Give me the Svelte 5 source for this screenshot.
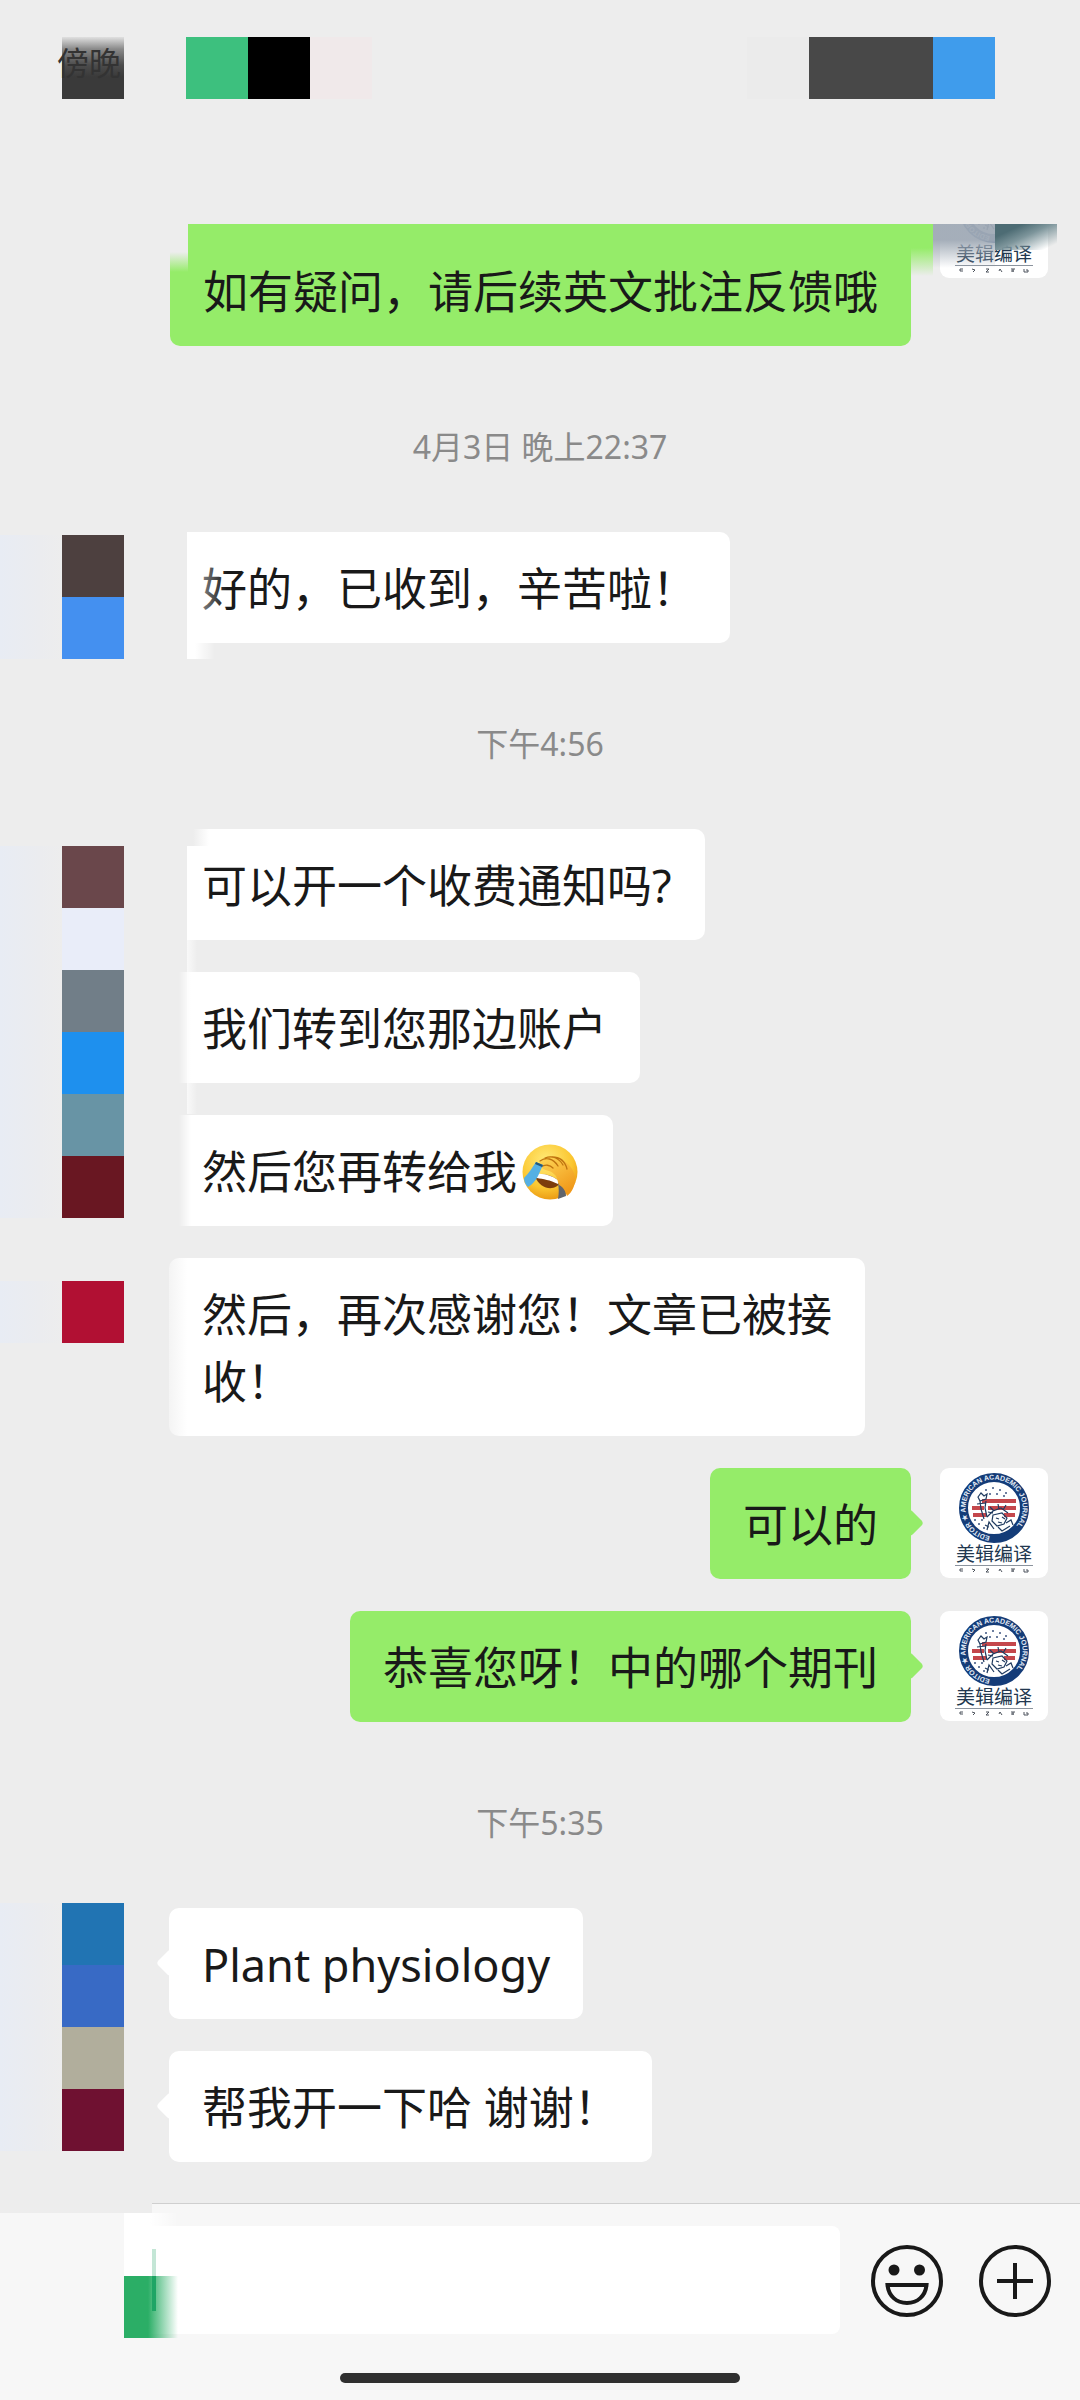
<script>
	const statusLeft = ['fade', 'none', 'green', 'black', 'pink'];
	const statusRight = ['pale', 'dark', 'dark', 'blue'];

	const entries = [
		{ kind: 'out', text: '如有疑问，请后续英文批注反馈哦', cut: 'top' },
		{ kind: 'time', text: '4月3日 晚上22:37' },
		{
			kind: 'in',
			text: '好的，已收到，辛苦啦！',
			cut: 'hard',
			tiles: { top: 3, colors: ['#4d403f', '#4490f0'] }
		},
		{ kind: 'time', text: '下午4:56' },
		{
			kind: 'in',
			text: '可以开一个收费通知吗?',
			cut: 'hard notch',
			tiles: {
				top: 17,
				colors: ['#6a474b', '#e9edf9', '#717e88', '#1e90ee', '#6894a5', '#691722']
			}
		},
		{ kind: 'in', text: '我们转到您那边账户', cut: 'soft' },
		{ kind: 'in', text: '然后您再转给我', cut: 'soft', emoji: true },
		{
			kind: 'in',
			text: '然后，再次感谢您！文章已被接\n收！',
			cut: 'light',
			tiles: { top: 23, colors: ['#b11033'] }
		},
		{ kind: 'out', text: '可以的' },
		{ kind: 'out', text: '恭喜您呀！中的哪个期刊' },
		{ kind: 'time', text: '下午5:35' },
		{
			kind: 'in',
			text: 'Plant physiology',
			tiles: { top: -5, colors: ['#2174b3', '#386ac5', '#b1ae9c', '#6f1131'] }
		},
		{ kind: 'in', text: '帮我开一下哈 谢谢！' }
	];

	let draft = $state('');
</script>

{#snippet avatar(id)}
	<svg class="avatar" viewBox="0 0 108 110" role="img" aria-label="美辑编译">
		<defs>
			<path id="ring-{id}" d="M54 68.5a28.5 28.5 0 1 1 .1 0" />
		</defs>
		<rect width="108" height="110" rx="9" fill="#fff" />
		<circle cx="54" cy="40" r="30.5" fill="#fff" stroke="#143c78" stroke-width="9" />
		<text class="ring-text">
			<textPath href="#ring-{id}" startOffset="4">EDITOR ★ AMERICAN ACADEMIC JOURNAL</textPath>
		</text>
		<g fill="#c4474c">
			<path d="M42 31h34v4H42zM32 38h12v4H32zM48 38h28v4H48zM33 45h13v4H33zM64 45h11v4H64z" />
		</g>
		<g fill="#3d5580">
			<circle cx="46" cy="22" r="1" /><circle cx="53" cy="20" r="1" />
			<circle cx="60" cy="22" r="1" /><circle cx="66" cy="25" r="1" />
			<circle cx="50" cy="26" r="1" /><circle cx="57" cy="26" r="1" />
			<circle cx="64" cy="28" r="1" /><circle cx="35" cy="52" r="1" />
			<circle cx="39" cy="56" r="1" /><circle cx="42" cy="52" r="1" />
			<circle cx="44" cy="60" r="1" />
		</g>
		<g fill="none" stroke="#1f3a5f" stroke-width="1.2">
			<path d="M38 29l3-4 3 3 3-2-1 5-6 2zM40 33l1 8 3 10M46 33l-1 7 2 9M37 36l9-1" />
			<path d="M47 49l6-6 8-3 7 5M50 39l4 4M58 36l1 5M66 37l-3 5M48 44l5 1" />
			<path d="M53 47l9-2 5 5-3 6-7 2-5-5zM56 50l3 1M62 49l3 2M58 54l4 1" />
			<path d="M47 62l2-8 5 7M66 55l5-3 2 5M58 59l4 4 8-5M45 57l4 2" />
		</g>
		<text class="brand" x="54" y="93" text-anchor="middle">美辑编译</text>
		<path d="M15 97.5h78" stroke="#8b939d" stroke-width="1" />
		<path
			d="M23 101h-3v2h3M32 101l3 1-2 2M46 101h3l-3 3h3M59 103l1-2 2 3M71 101h4M71 103h3M73 101v3M84 101v3h4v-2h-2"
			fill="none"
			stroke="#4d535c"
			stroke-width="1"
		/>
	</svg>
{/snippet}

{#snippet facepalm()}
	<svg class="emoji" viewBox="0 0 56 56" role="img" aria-label="捂脸">
		<defs>
			<radialGradient id="skin" cx="0.42" cy="0.3" r="0.75">
				<stop offset="0" stop-color="#ffea78" />
				<stop offset="0.65" stop-color="#fbc630" />
				<stop offset="1" stop-color="#e8930f" />
			</radialGradient>
			<linearGradient id="palm" x1="0" y1="0" x2="0.6" y2="1">
				<stop offset="0" stop-color="#ffd95a" />
				<stop offset="1" stop-color="#f0991a" />
			</linearGradient>
		</defs>
		<circle cx="28" cy="28" r="27.5" fill="url(#skin)" />
		<path d="M13 32c7-4 18-1 25 6-3 9-20 9-25-6z" fill="#7d3d0c" />
		<path d="M14 30c8-1 18 2 24 8l-2 2c-8-4-15-5-21-6z" fill="#fff" />
		<path d="M36 39l7 4 1 9-8 3c1-6 1-10 0-16z" fill="#60646c" />
		<path
			d="M17 20c1-3 5-4 7-6 4-3 10-2 15 1 7 4 13 10 14 18 1 7-3 16-8 19-2-6-4-9-8-11-2-4-1-8-5-11-4-4-8-3-12-6-2-2-4-1-3-4z"
			fill="url(#palm)"
		/>
		<path
			d="M18 17c6-4 13-3 18 5M23 14c7-3 14 0 18 7M30 13c8 0 13 4 15 12M19 23c4-3 9-2 12 1"
			fill="none"
			stroke="#bf7410"
			stroke-width="1.3"
			stroke-linecap="round"
		/>
		<path d="M14 18l7 3C17 29 15 38 6 43c-3-3-4-6-4-9 5-5 8-10 12-16z" fill="#55b0e4" />
		<path d="M14 18l7 3-1 2-7-3z" fill="#24587c" />
	</svg>
{/snippet}

<div class="screen">
	<header>
		<div class="blocks">
			{#each statusLeft as tone}
				<span class="block {tone}">
					{#if tone === 'fade'}<span class="clock">傍晚</span>{/if}
				</span>
			{/each}
		</div>
		<div class="blocks">
			{#each statusRight as tone}
				<span class="block {tone}"></span>
			{/each}
		</div>
	</header>

	<main>
		{#each entries as entry, i}
			{#if entry.kind === 'time'}
				<time>{entry.text}</time>
			{:else}
				<div class="row {entry.kind}">
					{#if entry.kind === 'out'}
						{@render avatar(i)}
					{:else}
						<div class="avatar"></div>
					{/if}
					<p class="bubble {entry.cut ?? 'tail'}">
						{entry.text}{#if entry.emoji}{@render facepalm()}{/if}
					</p>
					{#if entry.tiles}
						<div class="tiles" style:top="{entry.tiles.top}px">
							{#each entry.tiles.colors as color}
								<span style:background={color}></span>
							{/each}
						</div>
					{/if}
					{#if entry.cut === 'top'}
						<span class="patch slate"></span>
						<span class="patch teal"></span>
					{/if}
				</div>
			{/if}
		{/each}
	</main>

	<footer>
		<form onsubmit={(e) => e.preventDefault()}>
			<div class="field">
				<input type="text" aria-label="消息" bind:value={draft} />
				<span class="smudge"></span>
				<span class="caret"></span>
			</div>
			<button type="button" aria-label="表情">
				<svg viewBox="0 0 74 74" fill="none" stroke="#191919" stroke-width="4">
					<circle cx="37" cy="38" r="34" />
					<circle cx="24" cy="27" r="5.5" fill="#191919" stroke="none" />
					<circle cx="49.5" cy="27" r="5.5" fill="#191919" stroke="none" />
					<path d="M17.5 42h39c-1 11-9 18-19.5 18s-18.5-7-19.5-18z" />
				</svg>
			</button>
			<button type="button" aria-label="更多">
				<svg viewBox="0 0 74 74" fill="none" stroke="#191919" stroke-width="4">
					<circle cx="37" cy="38" r="34" />
					<path d="M37 20v36M19 38h36" />
				</svg>
			</button>
		</form>
		<div class="home"></div>
	</footer>
</div>

<style>
	:global(body) {
		background: #ededed;
	}
	.screen {
		display: flex;
		flex-direction: column;
		min-height: 100vh;
		font-family: 'Noto Sans', 'Noto Sans CJK SC', sans-serif;
		color: #191919;
		background: #ededed;
	}

	/* the header hides the upper line of the first message */
	header {
		position: relative;
		z-index: 1;
		display: flex;
		justify-content: space-between;
		box-sizing: border-box;
		height: 224px;
		padding: 37px 85px 0 62px;
		background: #ededed;
	}
	.blocks {
		display: flex;
	}
	.block {
		width: 62px;
		height: 62px;
	}
	.fade {
		position: relative;
		background: linear-gradient(#e0e0e0, #8a8a8a 12px, #4c4c4c 28px, #3a3a3a 40px);
	}
	.clock {
		position: absolute;
		left: -5px;
		top: 10px;
		font-size: 32px;
		line-height: 32px;
		white-space: nowrap;
		color: #333;
	}
	.green {
		background: #3dc07e;
	}
	.black {
		background: #000;
	}
	.pink {
		background: #f0e9ea;
	}
	.pale {
		background: #ebebeb;
	}
	.dark {
		background: #484848;
	}
	.blue {
		background: #3f9cec;
	}

	main {
		flex: 1;
		display: flex;
		flex-direction: column;
		margin-top: -56px;
		padding: 0 32px 41px;
	}
	.row {
		position: relative;
		display: flex;
		align-items: flex-start;
		gap: 29px;
	}
	.row + .row {
		margin-top: 32px;
	}
	.out {
		flex-direction: row-reverse;
	}
	.avatar {
		flex: none;
		width: 108px;
		height: 110px;
	}
	.ring-text {
		font-family: 'Liberation Sans', sans-serif;
		font-size: 7px;
		font-weight: 700;
		fill: #e4ecf7;
	}
	.brand {
		font-size: 19px;
		fill: #22384f;
	}
	time {
		padding: 81px 0 65px;
		font-size: 32px;
		line-height: 40px;
		text-align: center;
		color: #8a8a8a;
	}

	.bubble {
		position: relative;
		margin: 0;
		padding: 23px 33px 21px;
		border-radius: 10px;
		font-size: 45px;
		line-height: 67px;
		white-space: pre-line;
		background: #fff;
	}
	.out .bubble {
		background: #95ec69;
	}
	.tail::before {
		content: '';
		position: absolute;
		top: 45px;
		width: 20px;
		height: 20px;
		border-radius: 4px;
		background: inherit;
		transform: rotate(45deg);
	}
	.in .tail::before {
		left: -9px;
	}
	.out .tail::before {
		right: -9px;
	}
	.out .top {
		z-index: 0;
		padding-top: 90px;
		background: linear-gradient(transparent 84px, #95ec69 104px);
	}
	.top::before {
		content: '';
		position: absolute;
		z-index: -1;
		top: 56px;
		left: 18px;
		right: -22px;
		height: 52px;
		background: linear-gradient(#95ec69 24px, transparent);
	}
	.top::after {
		content: '';
		position: absolute;
		z-index: -1;
		top: 56px;
		left: 18px;
		right: 0;
		height: 60px;
		background: #95ec69;
	}
	.hard {
		background: linear-gradient(to right, transparent 18px, #fff 18px);
	}
	.hard::after {
		content: '';
		position: absolute;
		top: 100%;
		left: 18px;
		width: 28px;
		height: 16px;
		background: linear-gradient(to right, #fff 8px, transparent);
	}
	.hard::before {
		content: '';
		position: absolute;
		inset: 20px auto 20px 24px;
		width: 34px;
		background: linear-gradient(to right, rgba(255, 255, 255, 0.6), transparent);
	}
	.notch::before {
		inset: 0 auto auto 18px;
		width: 22px;
		height: 17px;
		background: linear-gradient(to right, #ededed 6px, transparent);
	}
	.notch::after {
		width: 10px;
		height: 174px;
		background: linear-gradient(to right, #f9f9f9, transparent);
	}
	.soft {
		background: linear-gradient(to right, transparent 10px, #fff 22px);
	}
	.light {
		background: linear-gradient(to right, #f4f4f4, #fff 18px);
	}
	.emoji {
		width: 56px;
		height: 56px;
		margin: 0 2px 0 5px;
		vertical-align: -11px;
	}

	/* coloured squares laid over the contact's pictures */
	.tiles {
		position: absolute;
		left: 30px;
		display: flex;
		flex-direction: column;
		width: 62px;
	}
	.tiles::before {
		content: '';
		position: absolute;
		inset: 0 100% 0 auto;
		width: 62px;
		background: linear-gradient(to right, #e8ecf4, #ebecef 40px, #ededed);
	}
	.tiles span {
		height: 62px;
	}
	.patch {
		position: absolute;
		top: 56px;
		width: 62px;
	}
	.slate {
		right: 53px;
		height: 44px;
		background: linear-gradient(rgba(160, 170, 182, 0.95) 16px, rgba(180, 188, 198, 0));
	}
	.teal {
		right: -9px;
		height: 26px;
		background: linear-gradient(155deg, #4d6c74 12px, #7d959b 24px, transparent 44px);
	}

	footer {
		position: relative;
		padding-bottom: 17px;
		border-top: 1px solid #cfcfcf;
		background: #f7f7f7;
	}
	footer::before {
		content: '';
		position: absolute;
		top: -1px;
		left: 0;
		width: 152px;
		height: 10px;
		background: #ededed;
	}
	form {
		display: flex;
		align-items: center;
		padding: 22px 28px 39px 124px;
	}
	.field {
		position: relative;
		flex: 1;
		display: flex;
		min-width: 0;
		margin-right: 30px;
	}
	input {
		flex: 1;
		min-width: 0;
		height: 108px;
		box-sizing: border-box;
		padding: 0 40px;
		border: 0;
		border-radius: 0 8px 8px 0;
		outline: 0;
		font: inherit;
		font-size: 45px;
		background: #fff;
	}
	.smudge {
		position: absolute;
		left: 0;
		top: -13px;
		width: 54px;
		height: 125px;
		background:
			linear-gradient(to right, #2bae66 24px, rgba(43, 174, 102, 0)) bottom / 100% 62px no-repeat,
			linear-gradient(to right, #fff 26px, transparent) top / 100% 14px no-repeat;
	}
	.caret {
		position: absolute;
		left: 28px;
		top: 23px;
		width: 4px;
		height: 62px;
		background: linear-gradient(#c4e6d6 27px, #1ea565 27px);
	}
	button {
		flex: none;
		width: 74px;
		height: 74px;
		padding: 0;
		border: 0;
		background: none;
	}
	button + button {
		margin-left: 34px;
	}
	button svg {
		display: block;
		width: 100%;
		height: 100%;
	}
	.home {
		width: 400px;
		max-width: 60%;
		height: 10px;
		margin: 0 auto;
		border-radius: 5px;
		background: #303030;
	}
</style>
